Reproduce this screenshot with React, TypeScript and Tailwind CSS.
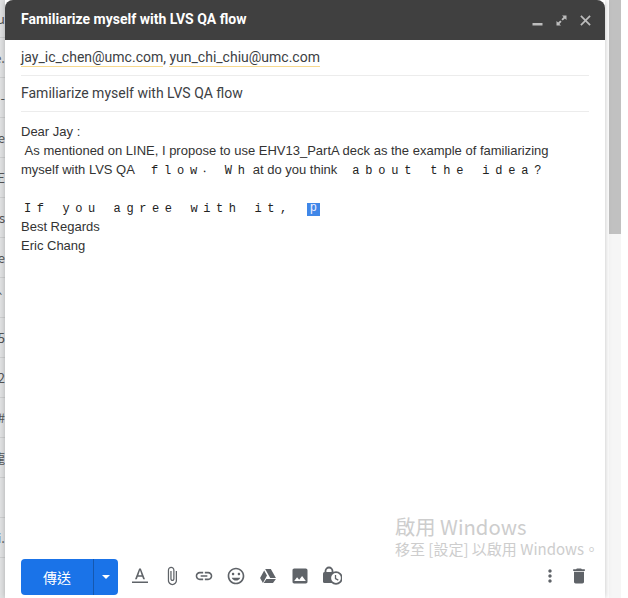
import React from 'react';

const cjk = 'font-["Noto_Sans_CJK_TC",sans-serif]';
const wide = "font-['Liberation_Mono',monospace] text-[12px] text-[#222]";

// rows of the inbox that peek out left of the compose window
const inboxRows = ['u', 'e.', '-', 'ce', 'E', 'is', 'e', '`', '5', '2', '#', '龍', '', 'i.'];

const ToolIcon = ({ d, size = 20 }: { d: string; size?: number }) => (
	<svg width={size} height={size} viewBox="0 0 24 24" className="shrink-0 fill-[#5f6368]">
		<path d={d} />
	</svg>
);

const toolIcons = [
	'M2.4 18.500h19.200v2H2.400zM11 3L6 16h2.200l1.100-3h5.400l1.100 3H18L13 3h-2zm-1 8l2-6 2 6h-4z',
	'M16.5 6v11.5c0 2.21-1.79 4-4 4s-4-1.79-4-4V5c0-1.38 1.12-2.5 2.5-2.5s2.5 1.12 2.5 2.5v10.5c0 .55-.45 1-1 1s-1-.45-1-1V6H10v9.5c0 1.38 1.12 2.5 2.5 2.5s2.5-1.12 2.5-2.5V5c0-2.21-1.79-4-4-4S7 2.79 7 5v12.5c0 3.04 2.46 5.5 5.5 5.5s5.5-2.46 5.5-5.5V6h-1.5z',
	'M3.9 12c0-1.71 1.39-3.1 3.1-3.1h4V7H7c-2.76 0-5 2.24-5 5s2.24 5 5 5h4v-1.9H7c-1.71 0-3.1-1.39-3.1-3.1zM8 13h8v-2H8v2zm9-6h-4v1.9h4c1.71 0 3.1 1.39 3.1 3.1s-1.39 3.1-3.1 3.1h-4V17h4c2.76 0 5-2.24 5-5s-2.24-5-5-5z',
	'M11.99 2C6.47 2 2 6.48 2 12s4.47 10 9.99 10C17.52 22 22 17.52 22 12S17.52 2 11.99 2zM12 20c-4.42 0-8-3.58-8-8s3.58-8 8-8 8 3.58 8 8-3.58 8-8 8zm3.5-9c.83 0 1.5-.67 1.5-1.5S16.33 8 15.5 8 14 8.67 14 9.5s.67 1.5 1.5 1.5zm-7 0c.83 0 1.5-.67 1.5-1.5S9.33 8 8.500 8 7 8.67 7 9.5 7.67 11 8.5 11zm3.5 6.5c2.33 0 4.31-1.46 5.11-3.5H6.89c.8 2.04 2.78 3.5 5.11 3.5z',
	'M8.600 3.500h6.800L21.500 14.500h-6.800zM7.400 5.500L2.500 14.500l3.400 5.800 4.900-9zM10 15.500h11.500L18 20.500H6.800z',
	'M21 19V5c0-1.1-.9-2-2-2H5c-1.1 0-2 .9-2 2v14c0 1.1.9 2 2 2h14c1.1 0 2-.9 2-2zM8.5 13.5l2.5 3.01L14.5 12l4.5 6H5l3.5-4.5z',
];

const LockClock = () => (
	<svg width="20" height="20" viewBox="0 0 20 20" className="shrink-0">
		<path d="M3.500 6.500V5a3.500 3.500 0 0 1 7 0v1.500" fill="none" stroke="#5f6368" strokeWidth="1.800" />
		<rect x="1" y="6" width="12" height="11" rx="1.500" fill="#5f6368" />
		<circle cx="14" cy="12" r="5.800" fill="#fff" stroke="#5f6368" strokeWidth="1.800" />
		<path d="M13.500 9v3.500l2.800 1.600" fill="none" stroke="#5f6368" strokeWidth="1.300" />
	</svg>
);

const App: React.FC = () => {
	return (
		<div className="relative flex h-[598px] w-[628px] overflow-hidden bg-white">
			<div className="flex w-[5px] shrink-0 flex-col bg-[#e2e3e4]">
				{inboxRows.map((t, i) => (
					<div
						key={i}
						className={`flex h-[40px] shrink-0 items-center justify-end overflow-hidden border-b border-[#cfd0d1] text-[13px] whitespace-nowrap text-[#555] first:h-[38px] ${cjk}`}
					>
						{t}
					</div>
				))}
			</div>

			<div className="z-10 flex w-[600px] shrink-0 flex-col bg-white font-['Roboto',sans-serif] shadow-[0_0_6px_rgba(0,0,0,0.25)]">
				<div className="flex h-[40px] items-center justify-between rounded-t-lg bg-[#404040] pr-[14px] pb-[2px] pl-[16px]">
					<span className="text-sm font-bold text-white">Familiarize myself with LVS QA flow</span>
					<div className="flex items-center gap-[13px] pt-[3px]">
						<svg width="11" height="11" viewBox="0 0 11 11" className="fill-[#bdbdbd]">
							<path d="M.500 8h10v2.500H.500z" />
						</svg>
						<svg width="11" height="11" viewBox="0 0 11 11" className="fill-[#bdbdbd]">
							<path d="M6 .500h4.500V5L8.900 3.400 6.700 5.600 5.400 4.300l2.200-2.200zM5 10.500H.500V6l1.600 1.600 2.200-2.200 1.300 1.300-2.200 2.200z" />
						</svg>
						<svg width="11" height="11" viewBox="0 0 11 11" className="fill-[#bdbdbd]">
							<path d="M1.500.300L5.500 4.300 9.500.300l1.200 1.200-4 4 4 4-1.200 1.200-4-4-4 4-1.200-1.200 4-4-4-4z" />
						</svg>
					</div>
				</div>

				<div className="mx-[16px] flex h-[36px] items-center border-b border-[#ececec] text-sm text-[#3c4043]">
					<span className="border-b border-[#f7d98f] leading-[17px]">jay_ic_chen@umc.com</span>
					<span>,&nbsp;</span>
					<span className="border-b border-[#f7d98f] leading-[17px]">yun_chi_chiu@umc.com</span>
				</div>
				<div className="mx-[16px] flex h-[36px] items-center border-b border-[#ececec] pb-[2px] text-sm text-[#3c4043]">
					Familiarize myself with LVS QA flow
				</div>

				<div className="flex-1 px-[16px] pt-[10px] font-['Liberation_Sans',sans-serif] text-[13px] leading-[19px] text-[#333]">
					<div>Dear Jay :</div>
					<div>&nbsp;As mentioned on LINE, I propose to use EHV13_PartA deck as the example of familiarizing</div>
					<div className="whitespace-pre">
						myself with LVS QA
						<span className={`mr-[2px] ml-[3px] tracking-[5.8px] ${wide}`}>{' flow‧ Wh'}</span>
						at do you think
						<span className={`ml-[2px] tracking-[5.8px] ${wide}`}>{' about the idea?'}</span>
					</div>
					<div>&nbsp;</div>
					<div className={`flex h-[19px] items-center pl-[3px] whitespace-pre tracking-[5.6px] ${wide}`}>
						<span>{'If you agree with it, '}</span>
						<span className="ml-[1px] h-[13px] w-[13px] bg-[#3f87e8] pl-[3px] text-[12px] leading-[11px] tracking-normal text-[#eef]">p</span>
					</div>
					<div className="-mt-[2px]">Best Regards</div>
					<div>Eric Chang</div>
				</div>

				<div className="flex h-[39px] items-start pr-[16px] pl-[16px]">
					<div className="flex h-[36px] w-[97px] overflow-hidden rounded bg-[#1a73e8] text-white">
						<span className={`flex w-[72px] items-center justify-center text-sm ${cjk}`}>傳送</span>
						<span className="flex flex-1 items-center justify-center border-l border-[#1558b0]">
							<span className="h-0 w-0 border-x-[4px] border-t-[4px] border-x-transparent border-t-white" />
						</span>
					</div>
					<div className="ml-[12px] flex items-center gap-[12px] pt-[7px]">
						{toolIcons.map((d) => (
							<ToolIcon key={d} d={d} />
						))}
						<LockClock />
					</div>
					<div className="ml-auto flex items-center gap-[9px] pt-[7px]">
						<ToolIcon d="M12 8c1.100 0 2-.9 2-2s-.9-2-2-2-2 .9-2 2 .9 2 2 2zm0 2c-1.100 0-2 .9-2 2s.9 2 2 2 2-.9 2-2-.9-2-2-2zm0 6c-1.100 0-2 .9-2 2s.9 2 2 2 2-.9 2-2-.9-2-2-2z" />
						<ToolIcon d="M6 19c0 1.100.9 2 2 2h8c1.100 0 2-.9 2-2V7H6v12zM19 4h-3.500l-1-1h-5l-1 1H5v2h14V4z" />
					</div>
				</div>
			</div>

			<div className="w-[4px] shrink-0 bg-white" />
			<div className="flex w-[12px] shrink-0 flex-col bg-[#f6f6f6]">
				<div className="h-[234px] bg-[#c1c1c1]" />
			</div>
			<div className="flex-1 bg-white" />

			<div className={`pointer-events-none absolute top-[512px] left-[395px] z-20 flex flex-col whitespace-nowrap text-[#cdcdcd] ${cjk}`}>
				<div className="text-[20.300px] leading-[28px]">啟用 Windows</div>
				<div className="text-[15px] leading-[18px]">移至 [設定] 以啟用 Windows。</div>
			</div>
		</div>
	);
};

export default App;
